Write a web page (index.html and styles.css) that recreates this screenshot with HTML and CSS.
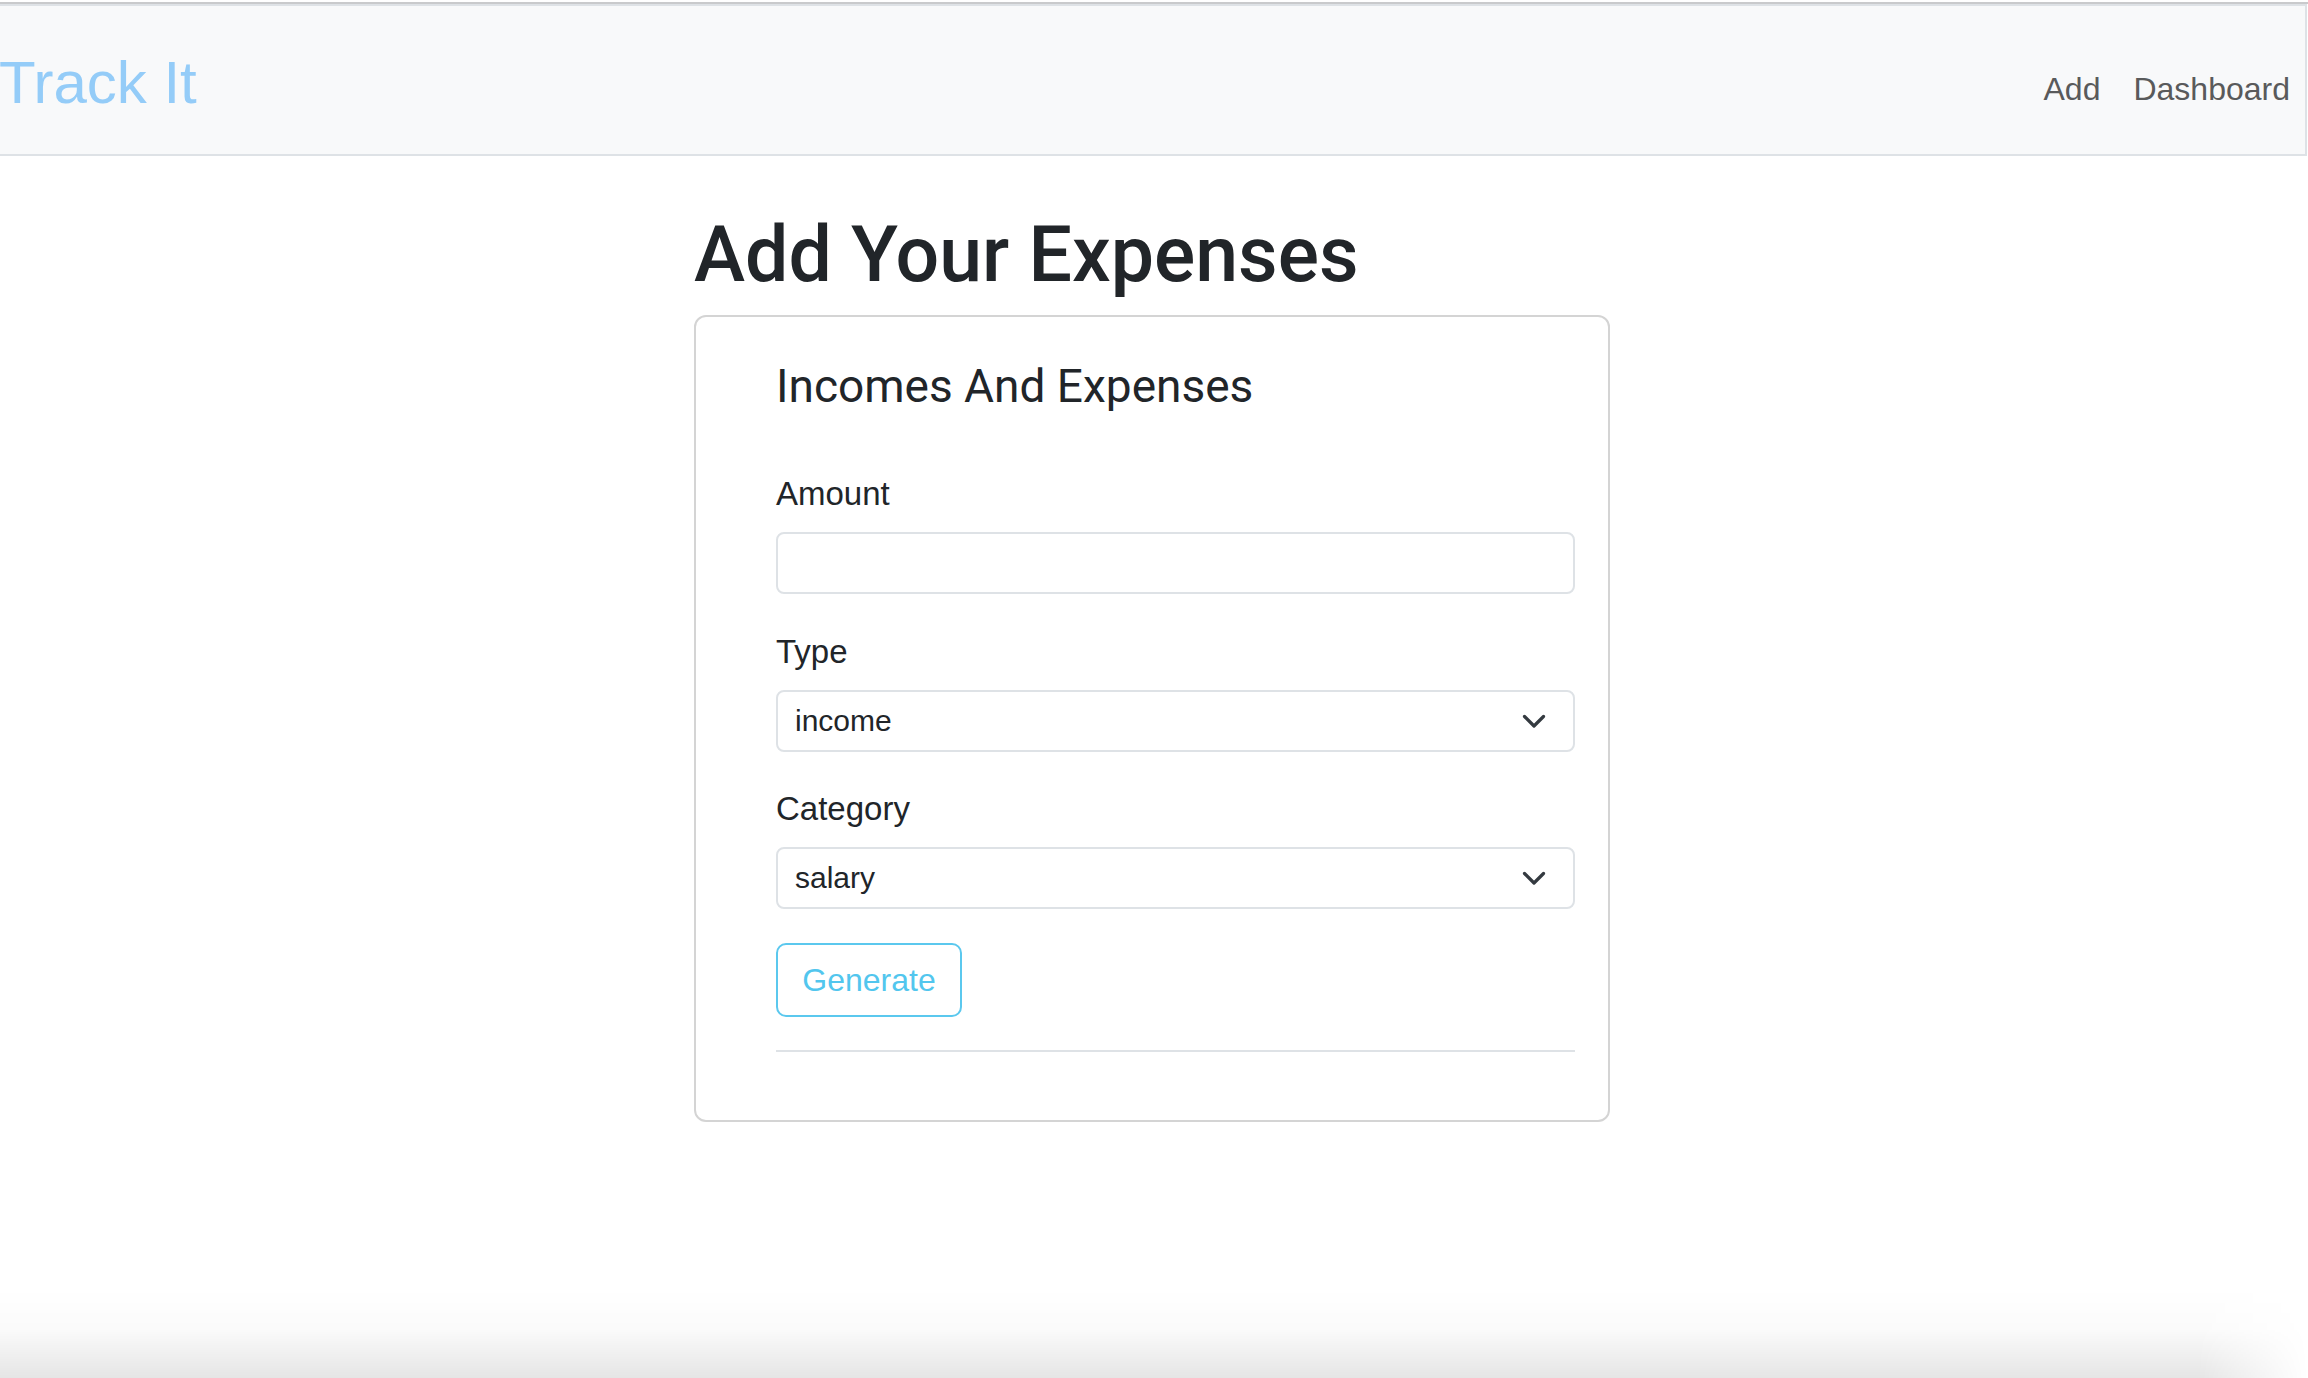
FILE: index.html
```html
<!DOCTYPE html>
<html lang="en">
<head>
<meta charset="utf-8">
<title>Track It</title>
<link rel="stylesheet" href="styles.css">
</head>
<body>
<div class="chrome-line"></div>
<nav class="navbar">
  <a class="brand" href="#">Track It</a>
  <ul class="nav-links">
    <li><a href="#">Add</a></li>
    <li><a href="#">Dashboard</a></li>
  </ul>
</nav>
<main class="page">
  <div class="column">
    <h1 class="page-title">Add Your Expenses</h1>
    <section class="card">
      <h3 class="card-title">Incomes And Expenses</h3>
      <form class="form">
        <label class="label" for="amount">Amount</label>
        <input class="field field-amount" id="amount" type="text">
        <label class="label">Type</label>
        <div class="field select">
          <span>income</span>
          <svg class="chevron" width="24" height="15" viewBox="0 0 24 15"><path d="M2.5 2.5 L12 12 L21.5 2.5" fill="none" stroke="#343a40" stroke-width="3.2" stroke-linecap="round" stroke-linejoin="round"/></svg>
        </div>
        <label class="label">Category</label>
        <div class="field select">
          <span>salary</span>
          <svg class="chevron" width="24" height="15" viewBox="0 0 24 15"><path d="M2.5 2.5 L12 12 L21.5 2.5" fill="none" stroke="#343a40" stroke-width="3.2" stroke-linecap="round" stroke-linejoin="round"/></svg>
        </div>
        <button class="btn-generate" type="button">Generate</button>
        <hr class="divider">
      </form>
    </section>
  </div>
</main>
<div class="window-shadow"></div>
</body>
</html>
```
FILE: styles.css
```css
* { box-sizing: border-box; }

html, body {
  margin: 0;
  padding: 0;
  background: #ffffff;
  font-family: "Liberation Sans", Arial, sans-serif;
  color: #212529;
}

body {
  padding-top: 2px;
  min-height: 1378px;
}

.chrome-line {
  height: 2px;
  background: #c9cacc;
}

.navbar {
  display: flex;
  justify-content: space-between;
  align-items: flex-start;
  height: 152px;
  margin-right: 1px;
  background: #f8f9fa;
  border-top: 2px solid #dee2e6;
  border-right: 2px solid #dee2e6;
  border-bottom: 2px solid #dee2e6;
}

.brand {
  margin-top: 41px;
  margin-left: -1px;
  font-size: 60px;
  line-height: 72px;
  color: #94ccf8;
  text-decoration: none;
}

.nav-links {
  display: flex;
  gap: 33px;
  list-style: none;
  margin: 59px 15px 0 0;
  padding: 0;
}

.nav-links a {
  font-size: 32px;
  line-height: 48px;
  color: #595a5b;
  text-decoration: none;
}

.page {
  display: flex;
  justify-content: center;
  padding-right: 4px;
}

.column {
  width: 916px;
}

.page-title {
  margin: 53px 0 14px;
  font-family: Roboto, "Liberation Sans", sans-serif;
  font-weight: 500;
  font-size: 77px;
  line-height: 92px;
  color: #212529;
}

.card {
  border: 2px solid #d4d4d4;
  border-radius: 12px;
  padding: 42px 33px 68px 80px;
}

.card-title {
  margin: 0 0 56px;
  font-family: Roboto, "Liberation Sans", sans-serif;
  font-weight: 400;
  font-size: 46px;
  line-height: 55px;
  color: #212529;
}

.form {
  display: flex;
  flex-direction: column;
}

.label {
  font-size: 33px;
  line-height: 48px;
  margin-bottom: 14px;
  color: #212529;
}

.field {
  display: block;
  width: 100%;
  height: 62px;
  margin: 0 0 33px;
  padding: 0 17px;
  border: 2px solid #dee2e6;
  border-radius: 8px;
  background: #ffffff;
  font-family: "Liberation Sans", Arial, sans-serif;
  font-size: 30px;
  color: #212529;
}

.field-amount { margin-bottom: 34px; }

.select {
  display: flex;
  align-items: center;
  justify-content: space-between;
  padding-right: 27px;
}

.form .select:last-of-type { margin-bottom: 34px; }

.chevron { display: block; }

.btn-generate {
  align-self: flex-start;
  width: 186px;
  height: 74px;
  padding: 0;
  border: 2px solid #5bc8ee;
  border-radius: 10px;
  background: #ffffff;
  color: #52c6ee;
  font-family: "Liberation Sans", Arial, sans-serif;
  font-size: 32px;
}

.divider {
  width: 100%;
  margin: 33px 0 0;
  border: 0;
  border-top: 2px solid #dee2e6;
}

.window-shadow {
  position: fixed;
  left: 0;
  right: 0;
  bottom: 0;
  height: 90px;
  pointer-events: none;
  background: linear-gradient(to bottom, rgba(0,0,0,0) 0%, rgba(0,0,0,0.015) 45%, rgba(0,0,0,0.1) 100%);
  -webkit-mask-image: linear-gradient(to left, transparent 0, #000 110px);
  mask-image: linear-gradient(to left, transparent 0, #000 110px);
}
```
